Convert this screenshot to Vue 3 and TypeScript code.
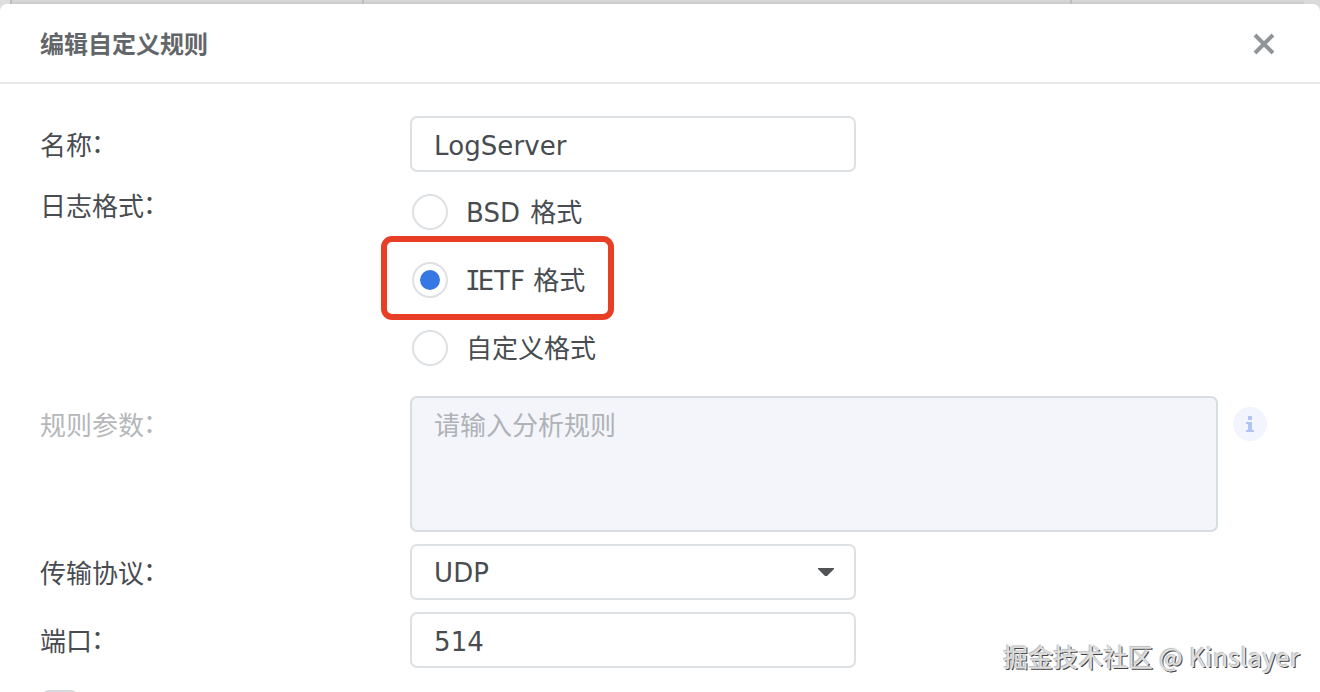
<script setup lang="ts">
import { ref } from 'vue'

interface FormatOption {
  value: string
  label: string
}

const name = ref('LogServer')
const format = ref('ietf')
const protocol = ref('UDP')
const port = ref('514')

const formats: FormatOption[] = [
  { value: 'bsd', label: 'BSD 格式' },
  { value: 'ietf', label: 'IETF 格式' },
  { value: 'custom', label: '自定义格式' },
]
</script>

<template>
  <div class="page">
    <div class="backdrop">
      <span class="cell cell-first"></span>
      <span class="cell cell-second"></span>
      <span class="cell cell-third"></span>
      <span class="cell cell-fourth"></span>
      <span class="cell cell-last"></span>
    </div>
    <section class="dialog">
      <header class="header">
        <h1 class="title">编辑自定义规则</h1>
        <button class="close" type="button" aria-label="关闭">
          <svg width="22" height="22" viewBox="0 0 22 22">
            <path d="M2 2L20 20M20 2L2 20" fill="none" stroke="#929597" stroke-width="4" />
          </svg>
        </button>
      </header>
      <div class="form">
        <div class="row">
          <label class="label">名称<span class="colon">：</span></label>
          <input v-model="name" class="field" type="text" />
        </div>
        <div class="row row-formats">
          <span class="label label-formats">日志格式<span class="colon">：</span></span>
          <div class="options">
            <div
              v-for="item in formats"
              :key="item.value"
              class="option"
              :class="{ selected: format === item.value }"
              @click="format = item.value"
            >
              <span class="radio"><span v-if="format === item.value" class="dot"></span></span>
              <span class="option-text" :class="item.value">{{ item.label }}</span>
            </div>
          </div>
        </div>
        <div class="row row-rule">
          <span class="label label-rule">规则参数<span class="colon">：</span></span>
          <div class="area">请输入分析规则</div>
          <span class="info">
            <svg width="34" height="34" viewBox="0 0 34 34">
              <circle cx="17" cy="17" r="17" fill="#f2f5fe" />
              <path d="M15 9h4v4h-4zM13 15h6v8h2v2h-8v-2h2v-6h-2z" fill="#b0c5f2" />
            </svg>
          </span>
        </div>
        <div class="row">
          <label class="label">传输协议<span class="colon">：</span></label>
          <div class="field select">
            <span>{{ protocol }}</span>
            <svg width="16" height="8" viewBox="0 0 16 8">
              <path d="M0 0H16V1L9 8H7L0 1Z" fill="#505457" />
            </svg>
          </div>
        </div>
        <div class="row">
          <label class="label">端口<span class="colon">：</span></label>
          <input v-model="port" class="field" type="text" />
        </div>
        <div class="row row-check"><span class="checkbox"></span></div>
      </div>
    </section>
    <div class="watermark">掘金技术社区<span class="author"> @ Kinslayer</span></div>
  </div>
</template>

<style>
body {
  margin: 0;
  overflow: hidden;
}
</style>

<style scoped>
.page {
  position: relative;
  box-sizing: border-box;
  width: 1320px;
  height: 692px;
  padding-top: 4px;
  overflow: hidden;
  background: #d2d2d2;
  color: #484c50;
  font-family: 'DejaVu Sans', 'Noto Sans CJK SC', sans-serif;
  font-size: 26px;
}
.backdrop {
  position: absolute;
  inset: 0 0 auto;
  display: flex;
  height: 12px;
}
.cell {
  box-sizing: border-box;
  border-right: 2px solid #bdbdbd;
  background: linear-gradient(#d9d9d9, #c9c9c9 4px);
}
.cell-first { width: 12px; background: #dedede; }
.cell-second { width: 352px; }
.cell-third { width: 708px; }
.cell-fourth { width: 232px; border-right: 0; }
.cell-last { flex: 1; border-right: 0; background: #dadada; }
.dialog {
  position: relative;
  height: 688px;
  overflow: hidden;
  border-radius: 7px 7px 0 0;
  background: #fff;
}
.header {
  box-sizing: border-box;
  display: flex;
  align-items: center;
  justify-content: space-between;
  height: 80px;
  padding: 0 45px 0 40px;
  border-bottom: 2px solid #e8e8e8;
}
.title {
  margin: 0;
  color: #626669;
  font-family: 'Noto Sans CJK SC', sans-serif;
  font-size: 24px;
  font-weight: 700;
  line-height: 36px;
}
.close {
  display: flex;
  padding: 2px 0 0;
  border: 0;
  background: none;
}
.form {
  display: flex;
  flex-direction: column;
  gap: 12px;
  padding: 32px 0 0 40px;
}
.row {
  display: flex;
  align-items: center;
  height: 56px;
}
.label {
  flex: none;
  width: 370px;
  font-family: 'Noto Sans CJK SC', sans-serif;
  line-height: 56px;
}
.colon {
  display: inline-block;
  line-height: 1;
  transform: translate(-1px, -2px);
}
.field {
  box-sizing: border-box;
  width: 446px;
  height: 56px;
  margin: 0;
  padding: 3px 22px 0;
  border: 2px solid #dde1e4;
  border-radius: 7px;
  outline: none;
  background: #fff;
  color: inherit;
  font: inherit;
  letter-spacing: 0.1px;
}
.row-formats {
  align-items: flex-start;
  height: 200px;
}
.label-formats {
  line-height: 42px;
}
.options {
  display: flex;
  flex-direction: column;
  gap: 12px;
  padding-left: 2px;
}
.option {
  position: relative;
  display: flex;
  align-items: center;
  height: 56px;
}
.radio {
  box-sizing: border-box;
  display: flex;
  align-items: center;
  justify-content: center;
  width: 36px;
  height: 36px;
  margin-right: 18px;
  border: 2px solid #dde1e4;
  border-radius: 50%;
}
.dot {
  width: 20px;
  height: 20px;
  border-radius: 50%;
  background: #3678e3;
}
.option-text {
  display: inline-block;
  padding-top: 2px;
  line-height: 36px;
}
.bsd {
  word-spacing: 2px;
}
.ietf::first-letter {
  margin: 0 -3px 0 -1px;
  font-family: 'DejaVu Sans Mono', monospace;
}
.selected::after {
  content: '';
  position: absolute;
  top: -16px;
  left: -31px;
  box-sizing: border-box;
  width: 233px;
  height: 84px;
  border: 6px solid #e83e25;
  border-radius: 11px;
}
.row-rule {
  align-items: flex-start;
  height: 136px;
}
.label-rule {
  color: #b5b7b9;
}
.area {
  box-sizing: border-box;
  width: 808px;
  height: 136px;
  padding: 9px 22px;
  border: 2px solid #d8dde2;
  border-radius: 7px;
  background: #f3f5fa;
  color: #afb2b6;
  line-height: 38px;
}
.info {
  display: flex;
  margin: 11px 0 0 15px;
}
.select {
  display: flex;
  align-items: center;
  justify-content: space-between;
  padding: 0 20px 0 22px;
}
.select span {
  padding-top: 2px;
}
.row-check {
  align-items: flex-start;
  margin-top: 10px;
}
.checkbox {
  box-sizing: border-box;
  width: 36px;
  height: 36px;
  margin-left: 2px;
  border: 2px solid #d5d9df;
  border-radius: 7px;
}
.watermark {
  position: absolute;
  right: 20px;
  bottom: 18px;
  color: #dedede;
  font-family: 'Noto Sans CJK SC', sans-serif;
  font-size: 25px;
  line-height: 36px;
  white-space: nowrap;
  text-shadow: -1px -1px 1px #bbb, 1px 1px 0 #444;
}
.author {
  letter-spacing: 0.35px;
}
</style>
